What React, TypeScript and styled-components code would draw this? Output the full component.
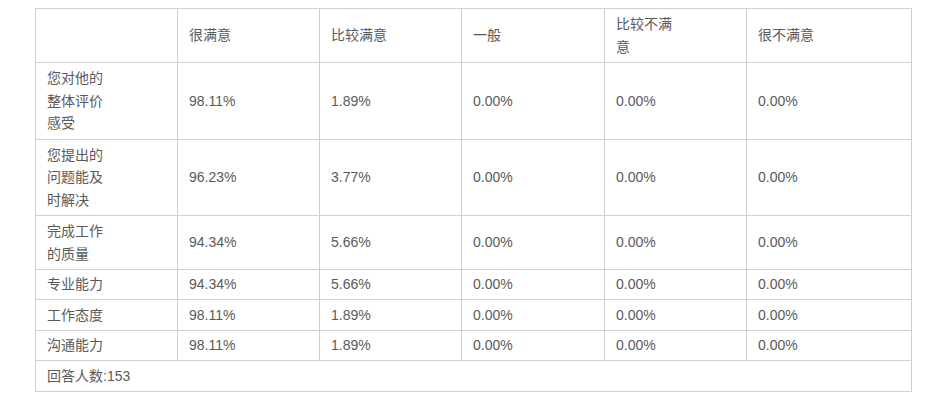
import React, { FC } from 'react'
import styled, { createGlobalStyle } from 'styled-components'

const columns = ['很满意', '比较满意', '一般', '比较不满意', '很不满意']
const colWidths = [142, 142, 142, 143, 142, 165]

type RowData = { label: string; values: string[]; height: number }

const rows: RowData[] = [
  { label: '您对他的整体评价感受', values: ['98.11%', '1.89%', '0.00%', '0.00%', '0.00%'], height: 77 },
  { label: '您提出的问题能及时解决', values: ['96.23%', '3.77%', '0.00%', '0.00%', '0.00%'], height: 76 },
  { label: '完成工作的质量', values: ['94.34%', '5.66%', '0.00%', '0.00%', '0.00%'], height: 54 },
  { label: '专业能力', values: ['94.34%', '5.66%', '0.00%', '0.00%', '0.00%'], height: 30 },
  { label: '工作态度', values: ['98.11%', '1.89%', '0.00%', '0.00%', '0.00%'], height: 31 },
  { label: '沟通能力', values: ['98.11%', '1.89%', '0.00%', '0.00%', '0.00%'], height: 30 },
]

const App: FC = () => (
  <>
    <GlobalStyle />
    <Page>
      <Table>
        <colgroup>
          {colWidths.map((w, i) => (
            <Col key={i} $w={w} />
          ))}
        </colgroup>
        <tbody>
          <Row $h={54}>
            <Cell />
            {columns.map((c) => (
              <Cell key={c}>
                <Narrow>{c}</Narrow>
              </Cell>
            ))}
          </Row>
          {rows.map((r) => (
            <Row key={r.label} $h={r.height}>
              <Cell>
                <Narrow>{r.label}</Narrow>
              </Cell>
              {r.values.map((v, i) => (
                <Cell key={i}>{v}</Cell>
              ))}
            </Row>
          ))}
          <Row $h={31}>
            <Cell colSpan={6}>回答人数:153</Cell>
          </Row>
        </tbody>
      </Table>
    </Page>
  </>
)

export default App

const GlobalStyle = createGlobalStyle`
  body {
    margin: 0;
    background: #fff;
  }
`

const Page = styled.div`
  padding: 8px 0 0 35px;
  font-family: 'Liberation Sans', 'Noto Sans CJK SC', sans-serif;
  font-size: 14px;
  color: #5a5a5a;
`

const Table = styled.table`
  width: 877px;
  table-layout: fixed;
  border-collapse: collapse;
`

const Col = styled.col<{ $w: number }>`
  width: ${(p) => p.$w}px;
`

const Row = styled.tr<{ $h: number }>`
  height: ${(p) => p.$h}px;
`

const Cell = styled.td`
  border: 1px solid #cfcfcf;
  padding: 0 11px;
  line-height: 22.5px;
  vertical-align: middle;
  text-align: left;
`

// keeps the label column and the long header to four characters a line
const Narrow = styled.span`
  display: inline-block;
  max-width: 60px;
`
